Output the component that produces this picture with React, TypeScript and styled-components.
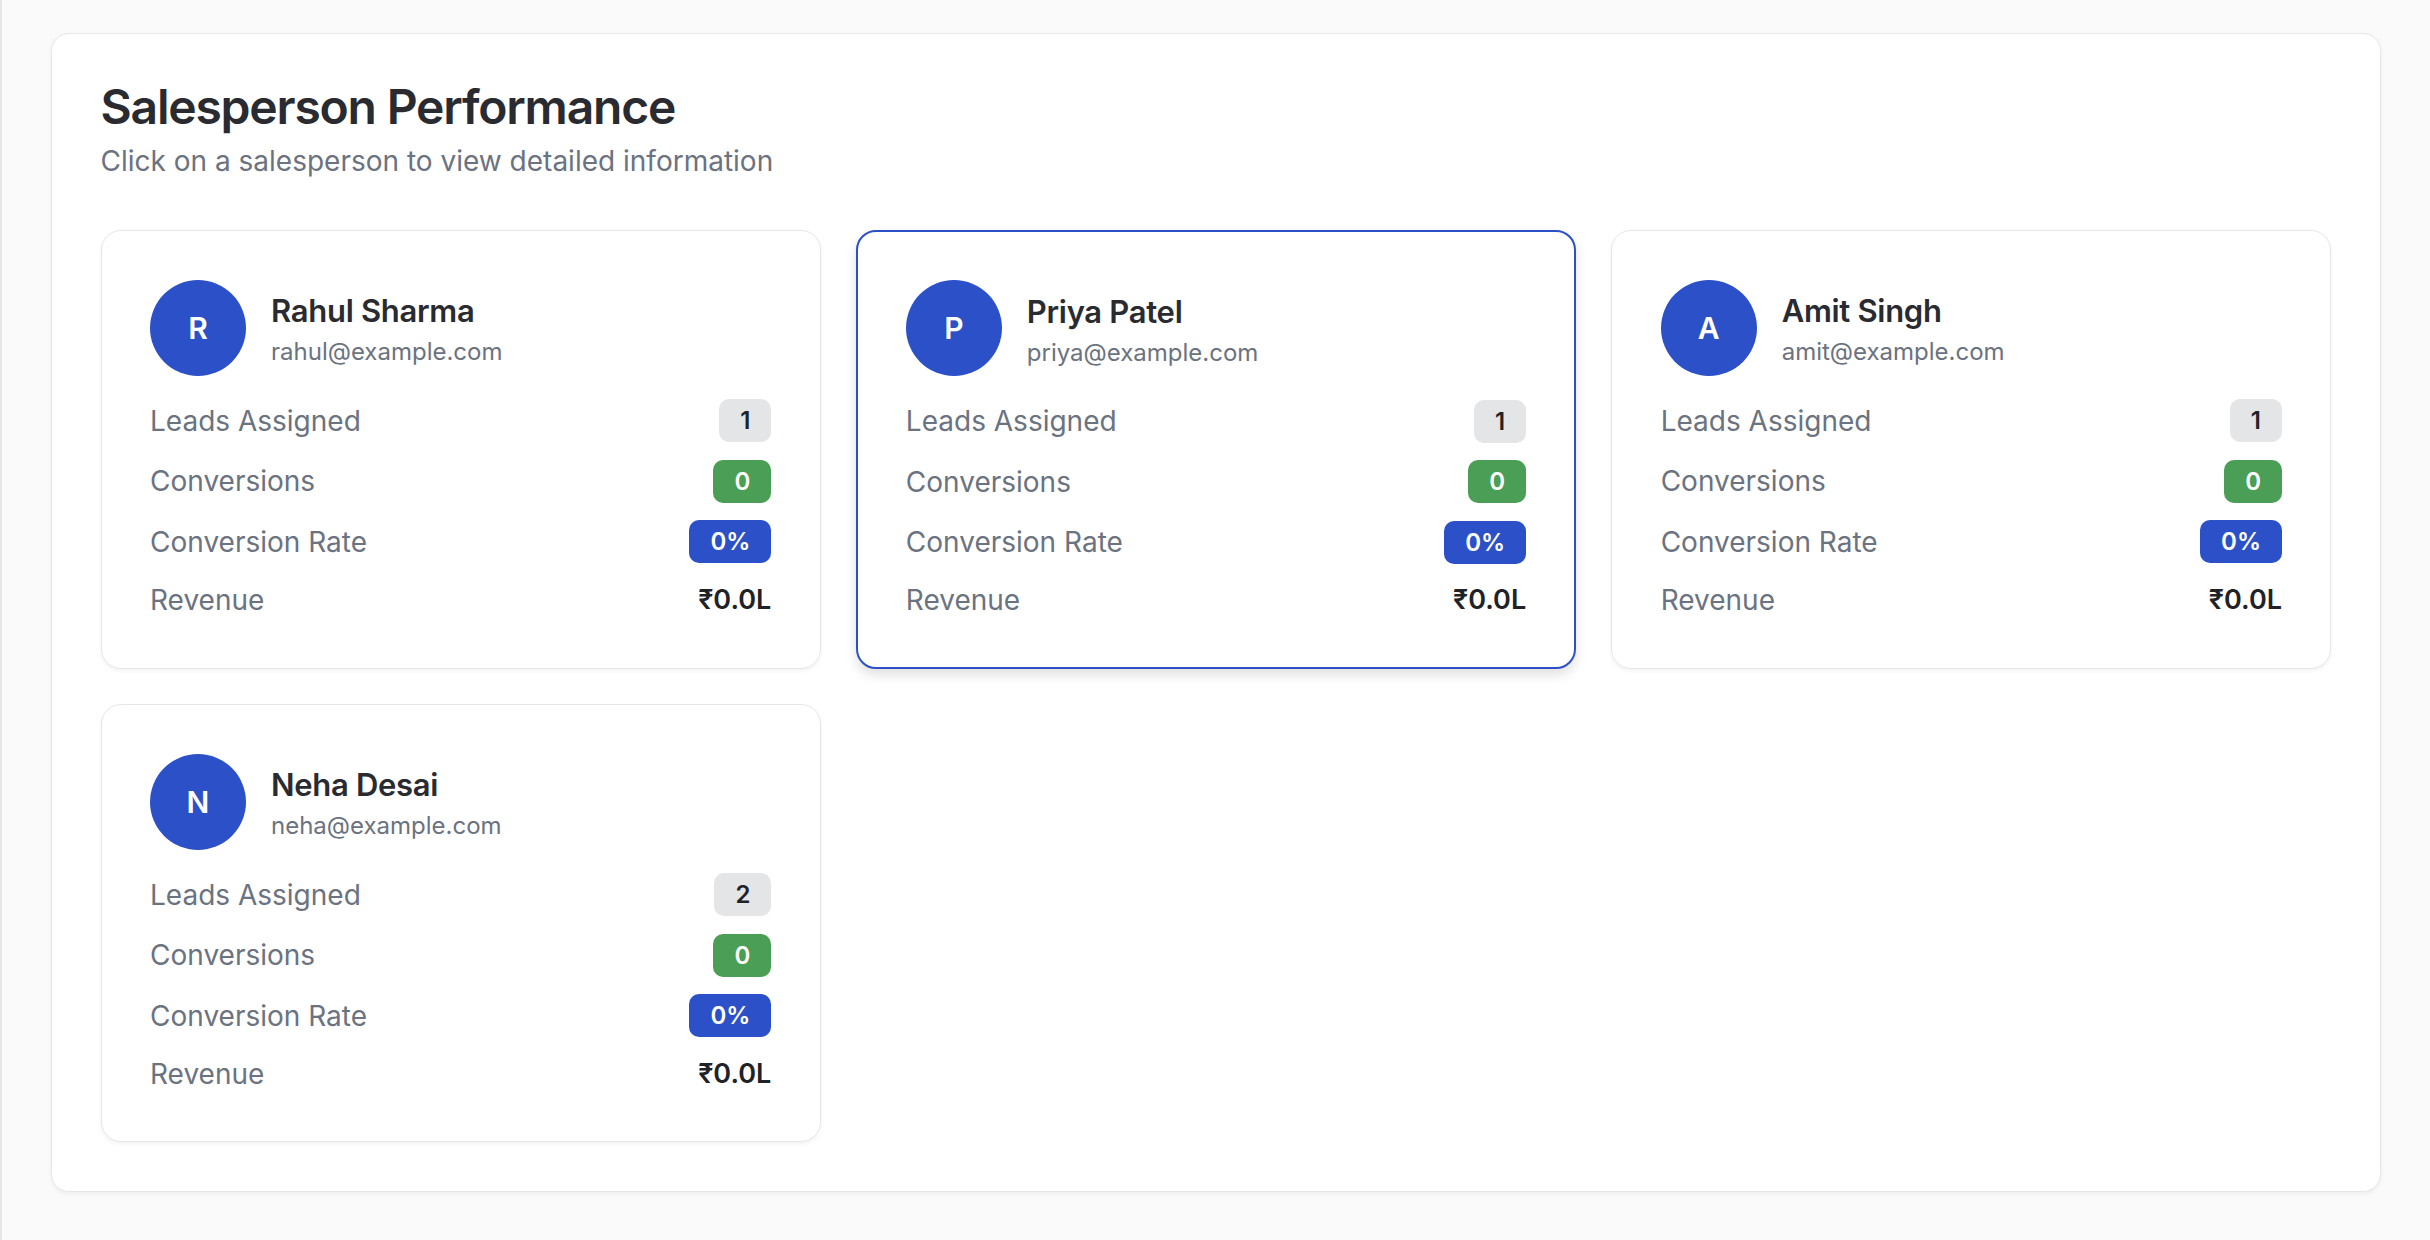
import React from 'react';
import styled, { createGlobalStyle } from 'styled-components';

const GlobalStyle = createGlobalStyle`
  html, body {
    margin: 0;
    padding: 0;
    background: #fafafa;
    font-family: Inter, "Noto Sans", "DejaVu Sans", sans-serif;
  }
  * { box-sizing: border-box; }
`;

interface Salesperson {
  name: string;
  email: string;
  leads: number;
  conversions: number;
  rate: string;
  revenue: string;
}

const people: Salesperson[] = [
  { name: 'Rahul Sharma', email: 'rahul@example.com', leads: 1, conversions: 0, rate: '0%', revenue: '₹0.0L' },
  { name: 'Priya Patel', email: 'priya@example.com', leads: 1, conversions: 0, rate: '0%', revenue: '₹0.0L' },
  { name: 'Amit Singh', email: 'amit@example.com', leads: 1, conversions: 0, rate: '0%', revenue: '₹0.0L' },
  { name: 'Neha Desai', email: 'neha@example.com', leads: 2, conversions: 0, rate: '0%', revenue: '₹0.0L' },
];

const Page = styled.div`
  min-height: 1240px;
  border-left: 2px solid #e6e6e6;
  padding: 33px 49px 50px 49px;
`;

const Panel = styled.section`
  background: #ffffff;
  border: 1.5px solid #e7e7e7;
  border-radius: 18px;
  box-shadow: 0 2px 4px rgba(0, 0, 0, 0.05);
  padding: 48.5px;
`;

const Title = styled.h1`
  margin: 0;
  font-size: 48px;
  line-height: 1;
  font-weight: 600;
  color: #292b31;
  letter-spacing: -1.2px;
`;

const Subtitle = styled.p`
  margin: 10px 0 0;
  font-size: 28px;
  line-height: 40px;
  color: #6b7280;
`;

const Grid = styled.div`
  margin-top: 49.5px;
  display: grid;
  grid-template-columns: repeat(3, 1fr);
  gap: 35px;
`;

const Card = styled.div<{ $selected?: boolean }>`
  background: #ffffff;
  border: ${(p) => (p.$selected ? '2px solid #2b50c8' : '1.5px solid #e7e7e7')};
  border-radius: 20px;
  padding: ${(p) => (p.$selected ? '48px' : '48.5px')};
  box-shadow: ${(p) =>
    p.$selected ? '0 6px 12px rgba(0, 0, 0, 0.12)' : '0 2px 4px rgba(0, 0, 0, 0.05)'};
  cursor: pointer;
`;

const Header = styled.div`
  display: flex;
  align-items: center;
  gap: 25px;
`;

const Avatar = styled.div`
  width: 96px;
  height: 96px;
  border-radius: 50%;
  background: #2b50c8;
  color: #ffffff;
  display: flex;
  align-items: center;
  justify-content: center;
  font-size: 30px;
  font-weight: 600;
  flex-shrink: 0;
`;

const Who = styled.div`
  display: flex;
  flex-direction: column;
  margin-top: 3px;
`;

const Name = styled.div`
  font-size: 31px;
  line-height: 43px;
  font-weight: 600;
  color: #292b31;
  letter-spacing: -0.3px;
`;

const Email = styled.div`
  margin-top: 3px;
  font-size: 24px;
  line-height: 34px;
  color: #6b7280;
`;

const Stats = styled.div`
  margin-top: 23.5px;
  display: flex;
  flex-direction: column;
  gap: 17.5px;
`;

const Row = styled.div`
  display: flex;
  align-items: center;
  justify-content: space-between;
`;

const Label = styled.span`
  font-size: 28px;
  line-height: 38px;
  color: #6b7280;
`;

type Tone = 'gray' | 'green' | 'blue';

const toneBg: Record<Tone, string> = { gray: '#e4e5e7', green: '#4a9e55', blue: '#2b50c8' };
const toneFg: Record<Tone, string> = { gray: '#1f2328', green: '#ffffff', blue: '#ffffff' };

const Badge = styled.span<{ $tone: Tone }>`
  display: inline-flex;
  align-items: center;
  height: 43px;
  padding: 0 21px;
  border-radius: 10px;
  font-size: 24px;
  font-weight: 600;
  background: ${(p) => toneBg[p.$tone]};
  color: ${(p) => toneFg[p.$tone]};
`;

const Value = styled.span`
  font-size: 27px;
  line-height: 38px;
  font-weight: 600;
  color: #1f2328;
`;

const PersonCard: React.FC<{ person: Salesperson; selected?: boolean }> = ({ person, selected }) => (
  <Card $selected={selected}>
    <Header>
      <Avatar>{person.name.charAt(0)}</Avatar>
      <Who>
        <Name>{person.name}</Name>
        <Email>{person.email}</Email>
      </Who>
    </Header>
    <Stats>
      <Row>
        <Label>Leads Assigned</Label>
        <Badge $tone="gray">{person.leads}</Badge>
      </Row>
      <Row>
        <Label>Conversions</Label>
        <Badge $tone="green">{person.conversions}</Badge>
      </Row>
      <Row>
        <Label>Conversion Rate</Label>
        <Badge $tone="blue">{person.rate}</Badge>
      </Row>
      <Row>
        <Label>Revenue</Label>
        <Value>{person.revenue}</Value>
      </Row>
    </Stats>
  </Card>
);

export default function App() {
  return (
    <>
      <GlobalStyle />
      <Page>
        <Panel>
          <Title>Salesperson Performance</Title>
          <Subtitle>Click on a salesperson to view detailed information</Subtitle>
          <Grid>
            {people.map((p, i) => (
              <PersonCard key={p.email} person={p} selected={i === 1} />
            ))}
          </Grid>
        </Panel>
      </Page>
    </>
  );
}
